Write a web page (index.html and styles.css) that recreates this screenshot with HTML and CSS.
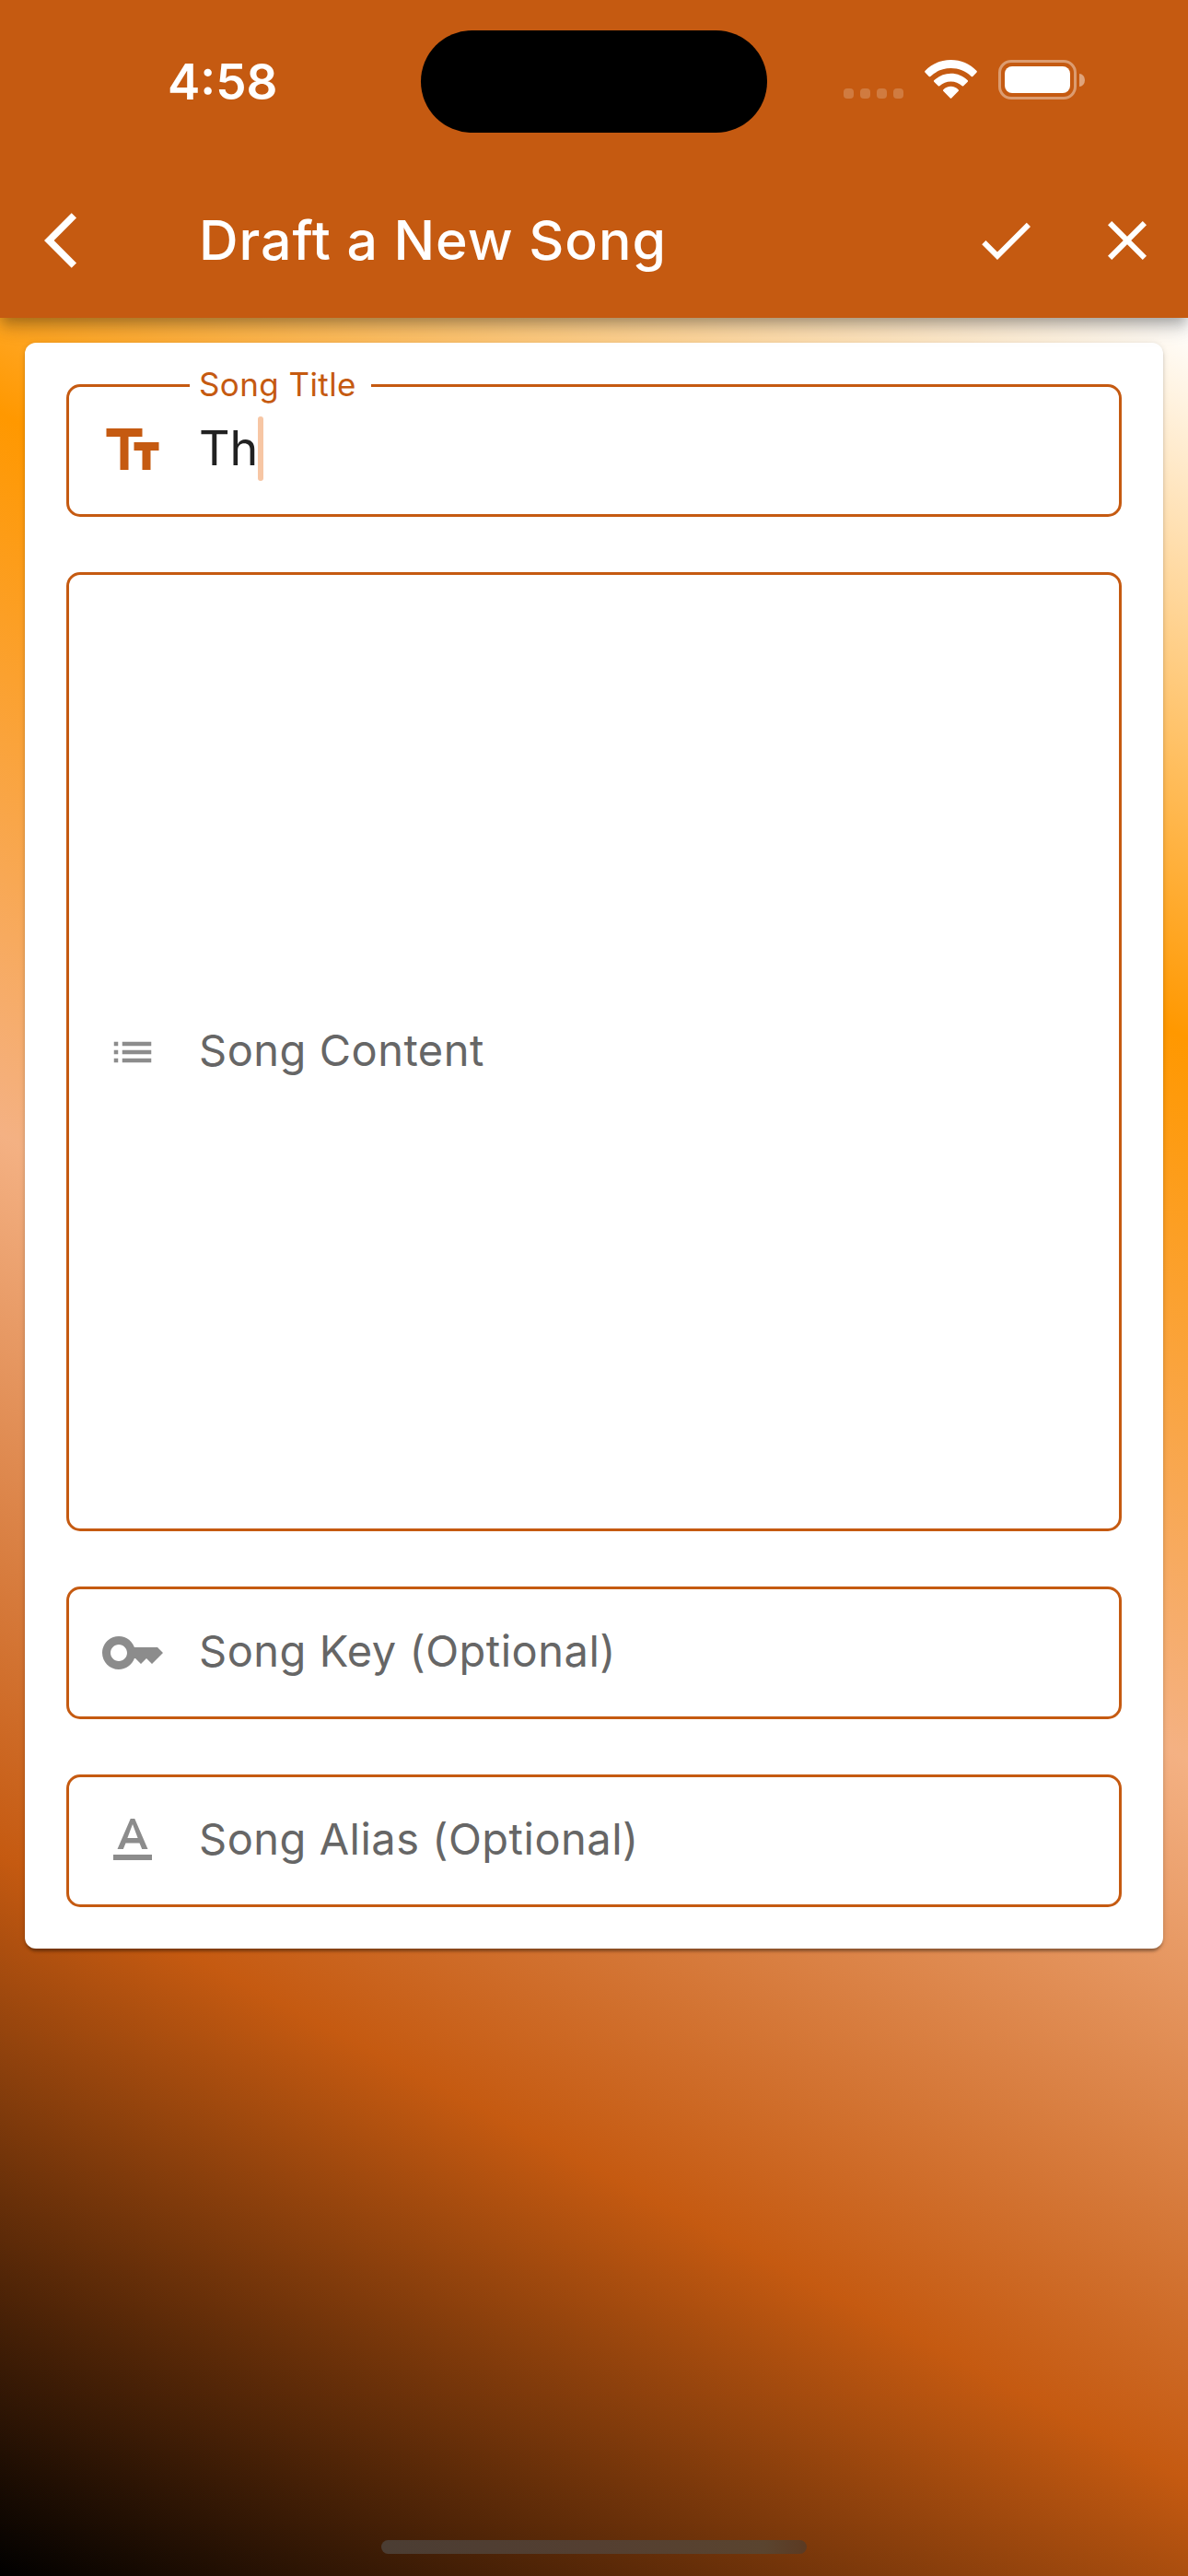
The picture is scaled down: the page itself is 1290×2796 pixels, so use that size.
FILE: index.html
```html
<!DOCTYPE html>
<html lang="en">
<head>
<meta charset="utf-8">
<title>Draft a New Song</title>
<link rel="stylesheet" href="styles.css">
</head>
<body>
<div class="screen">
  <header class="top">
    <div class="status">
      <div class="time">4:58</div>
      <div class="island"></div>
      <div class="indicators">
        <div class="dots"><i></i><i></i><i></i><i></i></div>
        <svg class="wifi" width="57" height="43" viewBox="0 0 57 43" fill="#fff">
          <path d="M0.400 12C8 4 17.500 0 28.500 0S49 4 56.600 12Q57.200 12.800 56.600 13.500L52.300 17.900Q51.500 18.600 50.700 17.900C44.500 12 37 9 28.500 9S12.500 12 6.300 17.900Q5.500 18.600 4.700 17.900L0.400 13.500Q-0.200 12.800 0.400 12Z"/>
          <path d="M10.200 22.300C15.300 17.300 21.500 14.700 28.500 14.700S41.700 17.300 46.800 22.300Q47.400 23 46.800 23.700L42.200 28.200Q41.500 28.900 40.700 28.200C37.200 25 33.200 23.400 28.500 23.400S19.800 25 16.300 28.200Q15.500 28.900 14.800 28.200L10.200 23.700Q9.600 23 10.200 22.300Z"/>
          <path d="M20.200 32.400C22.600 30 25.300 28.700 28.500 28.700S34.400 30 36.800 32.400Q37.400 33 36.800 33.700L29.200 41.500Q28.500 42.100 27.800 41.500L20.200 33.700Q19.600 33 20.200 32.400Z"/>
        </svg>
        <div class="battery"><div class="cell"><div class="charge"></div></div><div class="tip"></div></div>
      </div>
    </div>
    <nav class="bar">
      <svg class="icon back" viewBox="0 0 24 24"><path d="M11.670 3.870L9.900 2.100 0 12l9.900 9.900 1.770-1.770L3.540 12z"/></svg>
      <h1 class="title">Draft a New Song</h1>
      <svg class="icon" viewBox="0 0 24 24"><path d="M9 16.170L4.830 12l-1.420 1.410L9 19 21 7l-1.410-1.410z"/></svg>
      <svg class="icon" viewBox="0 0 24 24"><path d="M19 6.410L17.590 5 12 10.590 6.410 5 5 6.410 10.590 12 5 17.590 6.410 19 12 13.410 17.590 19 19 17.590 13.410 12z"/></svg>
    </nav>
  </header>
  <main class="content">
    <form class="card">
      <div class="field focused">
        <span class="label">Song Title</span>
        <span class="prefix"><svg class="icon" viewBox="0 0 24 24"><path d="M2.500 4v3h5v12h3V7h5V4h-13zm19 5h-9v3h3v7h3v-7h3V9z"/></svg></span>
        <span class="value">Th</span><span class="caret"></span>
      </div>
      <div class="field tall">
        <span class="prefix"><svg class="icon small" viewBox="0 0 24 24"><path d="M3 13h2v-2H3v2zm0 4h2v-2H3v2zm0-8h2V7H3v2zm4 4h14v-2H7v2zm0 4h14v-2H7v2zM7 7v2h14V7H7z"/></svg></span>
        <span class="hint">Song Content</span>
      </div>
      <div class="field">
        <span class="prefix"><svg class="icon" viewBox="0 0 24 24"><path d="M21 10h-8.350C11.830 7.670 9.610 6 7 6c-3.310 0-6 2.690-6 6s2.690 6 6 6c2.610 0 4.830-1.670 5.650-4H13l2 2 2-2 2 2 4-4.040L21 10zM7 15c-1.650 0-3-1.350-3-3s1.350-3 3-3 3 1.350 3 3-1.350 3-3 3z"/></svg></span>
        <span class="hint">Song Key (Optional)</span>
      </div>
      <div class="field">
        <span class="prefix"><svg class="icon" viewBox="0 0 24 24"><path d="M5 17v2h14v-2H5zm4.500-4.200h5l.9 2.200h2.100L12.750 4h-1.500L6.500 15h2.100l.9-2.200zM12 5.980L13.870 11h-3.740L12 5.980z"/></svg></span>
        <span class="hint">Song Alias (Optional)</span>
      </div>
    </form>
    <div class="home"></div>
  </main>
</div>
</body>
</html>
```
FILE: styles.css
```css
* { box-sizing: border-box; }

body {
  margin: 0;
  font-family: Inter, "Liberation Sans", sans-serif;
}

.screen {
  display: flex;
  flex-direction: column;
  width: 1290px;
  height: 2796px;
  overflow: hidden;
}

/* App bar */
.top {
  position: relative;
  z-index: 1;
  height: 345px;
  background: #c55a11;
  color: #fff;
  box-shadow: 0 6px 12px -3px rgba(0, 0, 0, .2), 0 12px 15px rgba(0, 0, 0, .14), 0 3px 30px rgba(0, 0, 0, .12);
}

.status {
  display: grid;
  grid-template-columns: 457px 376px 1fr;
  height: 177px;
  align-items: center;
}

.time {
  padding-left: 182px;
  font-size: 53px;
  font-weight: 600;
  line-height: 60px;
  letter-spacing: 0;
}

.island {
  height: 111px;
  border-radius: 56px;
  background: #000;
}

.indicators {
  display: flex;
  align-items: flex-end;
  height: 43px;
  padding-left: 83px;
  margin-top: -4px;
}

.dots { display: flex; gap: 7px; margin-bottom: 1px; }
.dots i { width: 11px; height: 11px; border-radius: 4px; background: rgba(255, 255, 255, .2); }

.wifi { margin-left: 23px; }

.battery { display: flex; align-items: center; gap: 3px; margin-left: 23px; }
.cell { width: 85px; height: 43px; padding: 4px; border: 3px solid rgba(255, 255, 255, .4); border-radius: 14px; }
.charge { height: 29px; border-radius: 8px; background: #fff; }
.tip { width: 6px; height: 14px; border-radius: 0 6px 6px 0 / 0 7px 7px 0; background: rgba(255, 255, 255, .45); }

.bar {
  display: flex;
  align-items: center;
  gap: 60px;
  height: 168px;
  padding: 0 30px 0 48px;
}

.icon { flex: none; width: 72px; height: 72px; fill: currentColor; }
.icon.small { width: 54px; height: 54px; }

.title {
  flex: 1;
  margin: 0 0 0 36px;
  font-size: 59px;
  font-weight: 500;
  line-height: 72px;
  letter-spacing: 0.95px;
  white-space: nowrap;
}

/* Body */
.content {
  display: flex;
  flex-direction: column;
  justify-content: space-between;
  flex: 1;
  padding: 27px 27px 24px;
  background: linear-gradient(207.76deg, #fff, #ff9800, #f4b183, #c55a11, #000);
}

.card {
  display: flex;
  flex-direction: column;
  gap: 60px;
  padding: 45px;
  border-radius: 12px;
  background: #fff;
  box-shadow: 0 6px 3px -3px rgba(0, 0, 0, .2), 0 3px 3px rgba(0, 0, 0, .14), 0 1px 6px rgba(0, 0, 0, .12);
}

.field {
  position: relative;
  display: flex;
  align-items: center;
  height: 144px;
  border: 3px solid #c55a11;
  border-radius: 15px;
  color: #666;
}

.tall { height: 1041px; }

.prefix {
  display: flex;
  justify-content: center;
  width: 144px;
  margin-left: -3px;
  color: #8c8c8c;
}

.hint { padding-bottom: 4px; font-size: 47px; line-height: 60px; letter-spacing: 0.5px; }

.focused .prefix { color: #c55a11; }
.value { padding-bottom: 4px; font-size: 52px; line-height: 64px; letter-spacing: 0; color: #212121; }
.caret { width: 6px; height: 70px; margin-bottom: 4px; border-radius: 3px; background: #f7c6a4; }

/* Floating label sits over the outline */
.label {
  position: absolute;
  top: -25px;
  left: 131px;
  width: 197px;
  padding-left: 10px;
  background: #fff;
  color: #c55a11;
  font-size: 35px;
  line-height: 44px;
  letter-spacing: 0.4px;
  white-space: nowrap;
}

.home {
  align-self: center;
  width: 462px;
  height: 15px;
  border-radius: 8px;
  background: linear-gradient(90deg, #4b3d33, #543f31 50%, #5a442f 90%, #5c3a22);
}
```
